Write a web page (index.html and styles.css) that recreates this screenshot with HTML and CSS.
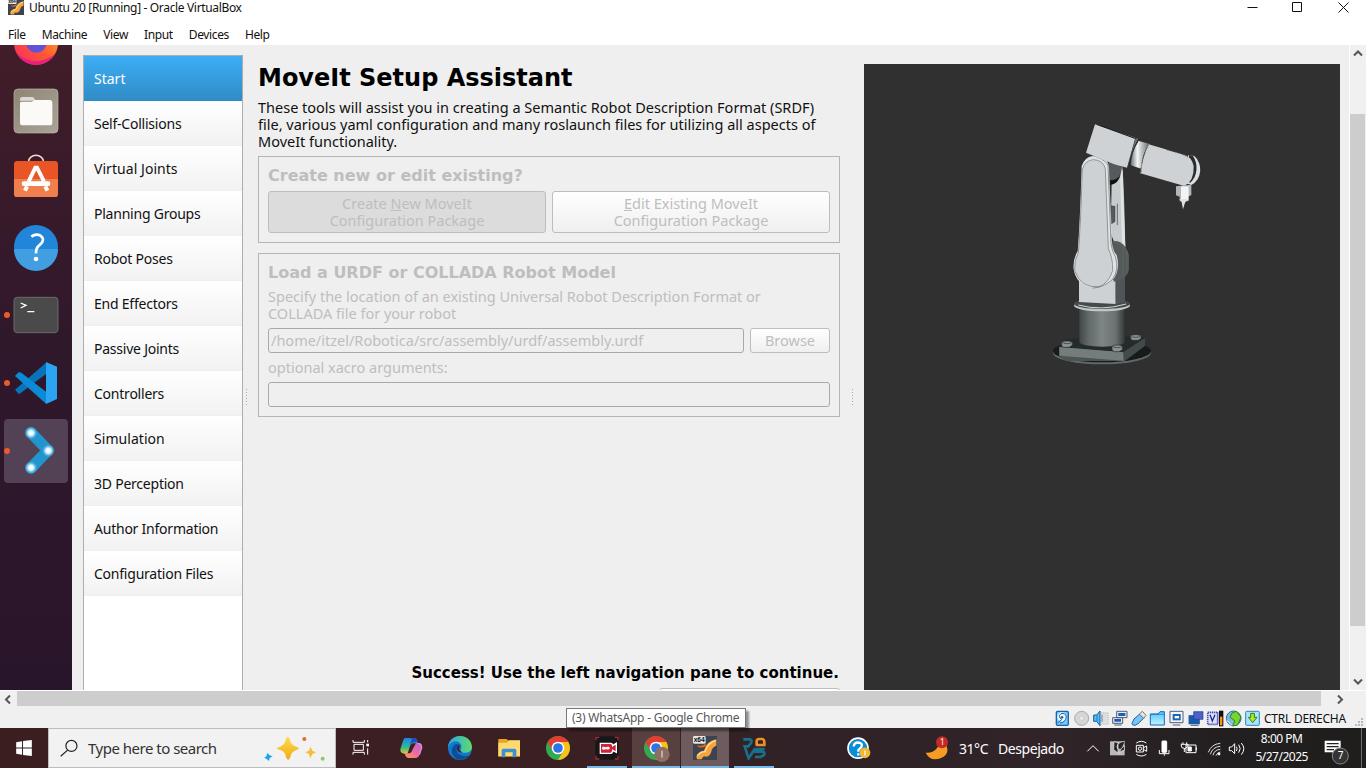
FILE: index.html
```html
<!DOCTYPE html>
<html lang="en">
<head>
<meta charset="utf-8">
<title>Ubuntu 20 [Running] - Oracle VirtualBox</title>
<link rel="stylesheet" href="styles.css">
</head>
<body>
<svg class="defs" width="0" height="0">
  <defs>
    <linearGradient id="doc" x1="0" y1="0" x2="1" y2="1"><stop offset="0" stop-color="#8d8674"/><stop offset="1" stop-color="#aaa498"/></linearGradient>
    <linearGradient id="blue" x1="0" y1="0" x2="0" y2="1"><stop offset="0" stop-color="#4cc8ff"/><stop offset="1" stop-color="#c3f0ff"/></linearGradient>
    <linearGradient id="fox" x1="0" y1="1" x2="1" y2="0"><stop offset="0" stop-color="#f5246c"/><stop offset=".5" stop-color="#ff5c2e"/><stop offset="1" stop-color="#ffbe38"/></linearGradient>
    <linearGradient id="metal"><stop offset="0" stop-color="#414646"/><stop offset=".2" stop-color="#626969"/><stop offset=".5" stop-color="#7d8585"/><stop offset=".8" stop-color="#6a7171"/><stop offset="1" stop-color="#343838"/></linearGradient>
    <linearGradient id="chromeTube"><stop offset="0" stop-color="#6c7173"/><stop offset=".35" stop-color="#f2f5f6"/><stop offset="1" stop-color="#5e6365"/></linearGradient>
    <linearGradient id="edgeA"><stop offset="0" stop-color="#2aa8e8"/><stop offset="1" stop-color="#5fdc68"/></linearGradient>
    <linearGradient id="copA" x1="0" y1="0" x2="0" y2="1"><stop offset="0" stop-color="#1d86e8"/><stop offset=".6" stop-color="#35bb8b"/><stop offset="1" stop-color="#efc52d"/></linearGradient>
    <linearGradient id="copB" x1="1" y1="0" x2="0" y2="1"><stop offset="0" stop-color="#ad62ec"/><stop offset=".5" stop-color="#ee6b9e"/><stop offset="1" stop-color="#f99a57"/></linearGradient>
    <linearGradient id="gold" x1="0" y1="0" x2="0" y2="1"><stop offset="0" stop-color="#ffda4a"/><stop offset="1" stop-color="#f1ab18"/></linearGradient>
    <radialGradient id="star"><stop offset="0" stop-color="#fff"/><stop offset=".4" stop-color="#dff4ff"/><stop offset="1" stop-color="#2ba8e0" stop-opacity="0"/></radialGradient>
    <symbol id="chrome" viewBox="0 0 72 72"><circle cx="36" cy="36" r="36" fill="#34a853"/><path d="M5 18A36 36 0 0 1 67 18H36A18 18 0 0 0 20 45z" fill="#e63b2e"/><path d="M67 18A36 36 0 0 1 36 72L52 45A18 18 0 0 0 36 18z" fill="#fbc116"/><circle cx="36" cy="36" r="19" fill="#fff"/><circle cx="36" cy="36" r="14.5" fill="#2c75e8"/></symbol>
    <symbol id="vbox" viewBox="0 0 72 72"><path d="M0 0H72V72H0z" fill="#3b4450"/><path d="M10 61Q18 44 33 44Q39 16 70 10V29Q56 34 54 50Q46 66 35 61Q29 61 26 70H12z" fill="#f6a43b"/><path d="M13 59Q22 48 36 47Q44 20 69 13" fill="none" stroke="#ffe4a0" stroke-width="4"/><path d="M12 27Q26 34 38 22V31Q29 37 15 33z" fill="#e5651d"/><rect y="0" width="38" height="23" rx="4" fill="#e4e6e8"/><text x="2" y="19" class="x64">x64</text></symbol>
  </defs>
</svg>

<header class="titlebar">
  <svg class="title-icon" viewBox="0 0 72 72"><use href="#vbox"/></svg>
  <span class="title-text">Ubuntu 20 [Running] - Oracle VirtualBox</span>
  <svg class="win-controls" viewBox="0 0 110 16" fill="none" stroke="#111"><path d="M.5 7.500H10.500M45.500 2.500H54.500V11.500H45.500zM91.500 2.500L101.500 12.500M101.500 2.500L91.500 12.500"/></svg>
</header>
<nav class="menubar"><span>File</span><span>Machine</span><span>View</span><span>Input</span><span>Devices</span><span>Help</span></nav>

<div class="guest">
  <aside class="dock">
    <svg viewBox="0 135 216 1310">
      <circle cx="108" cy="129" r="66" fill="url(#fox)"/><path d="M51 162A66 66 0 0 0 165 162Q108 205 51 162" fill="#e3158c" opacity=".75"/><circle cx="109" cy="127" r="31" fill="#6152dc"/>
      <rect x="42" y="267" width="132" height="132" rx="12" fill="url(#doc)" stroke="#beb9ab" stroke-width="2"/><path d="M60 297Q60 291 67 291H96Q101 291 104 297L108 302H60z" fill="#ddd9d3"/><path d="M60 309Q60 305 67 305H95L105 300H149Q157 300 157 308V368Q157 376 149 376H68Q60 376 60 368z" fill="#fbfaf8"/>
      <path d="M86 492V484A22 18 0 0 1 130 484V492" fill="none" stroke="#f6dccb" stroke-width="4.500"/><rect x="42" y="483" width="132" height="108" rx="10" fill="#e95524"/><path d="M42 537H174V581Q174 591 164 591H52Q42 591 42 581z" fill="#f07f4d"/><g stroke="#fff" fill="none"><path d="M86 544L106 503H111L132 544M81 559L75 572M136 559L142 572" stroke-width="12"/><path d="M72 551H144" stroke-width="14" stroke-linecap="round"/></g>
      <circle cx="108" cy="741" r="66" fill="#2186da"/><path d="M42 747A66 66 0 0 0 174 747z" fill="#419fe1"/><path d="M94 710Q107 700 120 706Q138 718 120 734Q107 744 108 760" fill="none" stroke="#fff" stroke-width="8"/><circle cx="108" cy="777" r="7" fill="#fff"/>
      <rect x="42" y="892" width="132" height="106" rx="10" fill="#4a4a4a" stroke="#6b6b6b" stroke-width="3"/><path d="M62 909L78 916L62 924M82 935H103" fill="none" stroke="#fff" stroke-width="4"/>
      <path d="M45 1169L138 1088V1122L57 1183z" fill="#0873b8"/><path d="M45 1128L56 1117Q60 1115 66 1120L138 1175V1211z" fill="#0b8bd5"/><path d="M138 1086L171 1100V1197L138 1212z" fill="#2ba5f2"/>
      <rect x="12" y="1257" width="192" height="192" rx="12" fill="#534156"/><path d="M93 1298L144 1351L93 1404" fill="none" stroke="#2295ce" stroke-width="34" stroke-linecap="round" stroke-linejoin="round"/><circle cx="93" cy="1299" r="20" fill="url(#star)"/><circle cx="145" cy="1352" r="20" fill="url(#star)"/><circle cx="93" cy="1403" r="20" fill="url(#star)"/>
      <g fill="#e95b2e"><circle cx="21" cy="945" r="9"/><circle cx="21" cy="1149" r="9"/><circle cx="21" cy="1353" r="9"/></g>
    </svg>
  </aside>
  <ul class="steps">
    <li class="current">Start</li><li>Self-Collisions</li><li class="wide">Virtual Joints</li><li>Planning Groups</li><li>Robot Poses</li><li>End Effectors</li><li>Passive Joints</li><li>Controllers</li><li class="wide">Simulation</li><li>3D Perception</li><li>Author Information</li><li>Configuration Files</li>
  </ul>
  <div class="splitter left"></div>
  <main class="setup">
    <h1>MoveIt Setup Assistant</h1>
    <p class="intro"><span>These tools will assist you in creating a Semantic Robot Description Format (SRDF)</span><span>file, various yaml configuration and many roslaunch files for utilizing all aspects of</span><span>MoveIt functionality.</span></p>
    <section class="group choose">
      <h2>Create new or edit existing?</h2>
      <div class="choices">
        <button class="pressed">Create <u>N</u>ew MoveIt<br>Configuration Package</button>
        <button><u>E</u>dit Existing MoveIt<br>Configuration Package</button>
      </div>
    </section>
    <section class="group load">
      <h2>Load a URDF or COLLADA Robot Model</h2>
      <p><span>Specify the location of an existing Universal Robot Description Format or</span><span>COLLADA file for your robot</span></p>
      <div class="path"><div class="field">/home/itzel/Robotica/src/assembly/urdf/assembly.urdf</div><button>Browse</button></div>
      <label>optional xacro arguments:</label>
      <div class="field"></div>
    </section>
    <p class="success">Success! Use the left navigation pane to continue.</p>
    <div class="load-files"></div>
  </main>
  <div class="splitter right"></div>
  <div class="viewport">
    <svg viewBox="0 0 600 795">
      <ellipse cx="216" cy="728" rx="147" ry="35" fill="#606868"/><ellipse cx="216" cy="723" rx="147" ry="34" fill="#171b1b"/>
      <path d="M88 710L279 726L344 683V708L284 753H108L88 737z" fill="#4d5454"/><path d="M88 711L111 687L333 678L344 685L280 727z" fill="#252a2a"/><path d="M88 711L280 727V752L88 737z" fill="#747c7c"/><path d="M280 727L344 686V707L284 752z" fill="#444a4a"/>
      <path d="M148 590H284V695A68 15 0 0 1 148 695z" fill="url(#metal)"/>
      <g fill="#8a9292" stroke="#2e3333" stroke-width="2"><path d="M95 696H127V706L117 712H100L95 706zM246 708H277V719L267 725H253L246 719zM302 676H333V686L324 691H308L302 686z"/><ellipse cx="111" cy="697" rx="13" ry="4"/><ellipse cx="262" cy="709" rx="13" ry="4"/><ellipse cx="317" cy="678" rx="13" ry="4"/></g>
      <ellipse cx="216" cy="587" rx="84" ry="17" fill="#c0c6c7"/><ellipse cx="216" cy="581" rx="84" ry="16" fill="#454a4a"/><path d="M145 585Q215 604 288 582" stroke="#d4d8da" stroke-width="3" fill="none"/>
      <path d="M147 497L257 510V582L147 576z" fill="#cdd1d4"/><path d="M257 506L285 490V575L257 583z" fill="#505657"/>
      <path d="M246 173L277 170Q282 220 286 414L264 425L242 370z" fill="#c6cbce"/><path d="M270 183L278 180Q280 280 286 410L276 402z" fill="#dfe3e4"/>
      <path d="M236 152L278 162L271 198Q266 219 240 225z" fill="#555b5d"/><path d="M238 211Q265 211 270 192Q267 221 240 225z" fill="#111"/>
      <path d="M245 394A43 55 0 0 1 297 443V479Q291 510 251 515z" fill="#54595a"/><path d="M249 394Q286 405 297 440M279 410V500M291 425V490" stroke="#747a7b" fill="none"/>
      <path d="M243 287L255 289V335L244 342z" fill="#555b5d" stroke="#222"/><path d="M262 281V345" stroke="#656b6d" stroke-width="3"/>
      <path d="M155 168Q165 140 190 138Q234 139 237 171L246 400Q250 427 260 435Q272 480 248 511Q216 539 180 531Q139 523 131 478Q128 448 143 424Q150 340 155 168z" fill="#e0e3e5"/>
      <path d="M159 178Q165 151 190 149Q222 149 226 179L234 416Q248 446 245 482Q237 520 203 531Q153 529 136 487Q130 454 146 429Q155 344 159 178z" fill="#cdd1d4"/>
      <path d="M157 180Q164 151 190 149Q221 150 226 178L235 416Q249 445 248 482Q236 519 208 530Q153 536 134 482Q132 452 145 428Q152 350 157 180z" fill="none" stroke="#8f9597" stroke-width="3"/><path d="M170 132Q224 144 234 165L243 400Q246 425 256 440Q269 480 246 510Q217 534 188 534" fill="none" stroke="#3a4042" stroke-width="1.500"/>
      <path d="M195 43L316 83L291 173L253 163L234 155L168 128z" fill="#ced2d5"/><path d="M195 43L218 48L331 89L316 87z" fill="#171a1b"/><path d="M316 86L325 84Q302 140 292 173z" fill="#666c6f"/>
      <path d="M324 92L360 102Q334 131 336 177L302 166Q301 135 324 92z" fill="url(#chromeTube)"/><path d="M324 93Q302 126 300 166L312 175" fill="none" stroke="#2b2e30" stroke-width="4"/>
      <path d="M474 136L493 138A48 52 0 0 1 484 225L464 218z" fill="#dce0e1"/><path d="M477 135L489 138A43 54 0 0 1 481 218L470 213z" fill="#292c2e"/>
      <path d="M356 103L465 135Q487 143 491 169Q493 213 463 228L331 190Q339 135 356 103z" fill="#ced2d5"/><path d="M356 104Q334 140 333 189M410 119L451 130L474 141" fill="none" stroke="#303335" stroke-width="2" stroke-dasharray="6 2"/>
      <path d="M438 229L484 224V255L473 261V274H449V260L438 256z" fill="#b2b7ba"/><path d="M453 229H476V272H453z" fill="#f1f3f4"/><path d="M448 267H474L465 278L459 298L455 277z" fill="#dee2e4"/>
    </svg>
  </div>
  <div class="vscroll"><svg viewBox="0 0 16 16"><path d="M4 10L8 6L12 10"/></svg><i></i><svg viewBox="0 0 16 16"><path d="M4 6L8 10L12 6"/></svg></div>
</div>

<div class="hscroll"><svg viewBox="0 0 17 15"><path d="M10 4L6 8L10 12"/></svg><i></i><svg viewBox="0 0 17 15"><path d="M6 4L10 8L6 12"/></svg></div>

<footer class="status">
  <div class="tooltip">(3) WhatsApp - Google Chrome</div>
  <div class="indicators">
    <svg viewBox="67 118 57 51"><rect x="77" y="122" width="36" height="42" rx="4" fill="#72c9fc" stroke="#1665ae" stroke-width="4"/><circle cx="94" cy="139" r="14" fill="#eef8ff"/><path d="M80 157L93 147Q80 137 91 129Q104 125 107 139Q103 157 88 157" fill="none" stroke="#2462a6" stroke-width="3"/><circle cx="94" cy="140" r="4" fill="#2462a6"/></svg>
    <svg viewBox="126 118 57 51"><circle cx="155" cy="143" r="21" fill="#d6d6d6" stroke="#ababab" stroke-width="3"/><circle cx="155" cy="143" r="6" fill="#eee" stroke="#aaa"/></svg>
    <svg viewBox="183 118 57 51"><path d="M212 126H235V161H212" fill="#ddd" stroke="#aaa" stroke-width="2" stroke-dasharray="3"/><path d="M191 133H200L210 121V165L200 152H191z" fill="#50bdf5" stroke="#185c9f" stroke-width="3"/><path d="M201 134V151M216 132V154" stroke="#185c9f" stroke-width="2"/></svg>
    <svg viewBox="240 118 57 51"><path d="M260 122H291V141H260zM248 141H278V158H248z" fill="#e7ecf4" stroke="#555c74" stroke-width="3"/><path d="M265 127H286V136H265zM253 145H273V153H253z" fill="#1c5fad"/><path d="M253 163H275" stroke="#555c74" stroke-width="3"/></svg>
    <svg viewBox="297 118 57 51"><path d="M306 158L312 145L329 130L341 143L324 159Q315 168 307 162z" fill="#75c5f5" stroke="#2361aa" stroke-width="3"/><path d="M328 130L337 122L348 134L341 143z" fill="#e6e6e6" stroke="#777" stroke-width="3"/></svg>
    <svg viewBox="354 118 57 51"><path d="M361 130L384 130L390 123H403V163H361z" fill="url(#blue)" stroke="#1769b8" stroke-width="3"/><path d="M363 131H402" stroke="#1769b8" stroke-width="2"/></svg>
    <svg viewBox="411 118 57 51"><path d="M420 122H459V156H420zM428 163H451" fill="#f1f5fa" stroke="#555c74" stroke-width="3"/><path d="M428 130H452V149H428z" fill="#1864b6"/><path d="M434 136H447V143H434z" fill="#fff"/></svg>
    <svg viewBox="468 118 57 51"><rect x="475" y="133" width="35" height="28" fill="#185aab" stroke="#eee"/><path d="M491 123H519V146H491z" fill="#4c61c9" stroke="#2b398d" stroke-width="2"/><path d="M482 164H506" stroke="#777" stroke-width="4"/></svg>
    <svg viewBox="525 118 57 51"><rect x="533" y="125" width="30" height="36" fill="#dce0ff" stroke="#444bac" stroke-width="5" stroke-dasharray="4 2"/><path d="M540 132L547 151L555 132" fill="none" stroke="#252b8b" stroke-width="4"/><path d="M567 120H580V167H567z" fill="#111"/><path d="M570 138H577V164H570z" fill="#ff9417"/></svg>
    <svg viewBox="583 118 57 51"><circle cx="612" cy="143" r="22" fill="#7dbbe7" stroke="#246dae" stroke-width="3"/><path d="M607 127L620 122L634 139L624 163L608 166L616 151L601 140z" fill="#79d52d" stroke="#298720" stroke-width="3"/><path d="M591 149L601 158L607 164" stroke="#fff" stroke-width="3"/></svg>
    <svg viewBox="640 118 57 51"><rect x="648" y="122" width="41" height="42" rx="3" fill="#a4e5ff" stroke="#3582b4" stroke-width="3"/><path d="M663 128H674V140H682L669 156L656 140H663z" fill="#aee72c" stroke="#387e1c" stroke-width="3"/></svg>
  </div>
  <span class="hostkey">CTRL DERECHA</span>
  <svg class="grip" viewBox="0 0 9 9" fill="#b8b8b8"><path d="M6 0H8V2H6zM3 3H5V5H3zM6 3H8V5H6zM0 6H2V8H0zM3 6H5V8H3zM6 6H8V8H6z"/></svg>
</footer>

<div class="taskbar">
  <div class="start"><svg viewBox="48 179 48 49" fill="#fff"><path d="M48 186L66 183V202H48zM69 182L96 179V202H69zM48 205H66V224L48 221zM69 205H96V228L69 225z"/></svg></div>
  <div class="search">
    <svg class="glass" viewBox="178 178 52 52" fill="none" stroke="#222" stroke-width="3.500"><circle cx="211" cy="198" r="16"/><path d="M200 210L180 228"/></svg>
    <span>Type here to search</span>
    <svg class="sparkles" viewBox="790 162 189 81"><path d="M865 168Q869 167 873 184Q876 193 892 198Q904 202 892 206Q878 211 874 221Q869 239 865 236Q860 236 857 220Q853 210 839 206Q825 202 837 199Q853 193 856 184Q860 167 865 168z" fill="url(#gold)"/><path d="M933 197L938 209L949 214L938 219L932 232L928 219L917 214L928 209z" fill="#f7be31"/><path d="M803 216L810 223L819 226L810 231L808 240L801 234L794 230L800 226z" fill="#1ba5ed"/><circle cx="914" cy="174" r="6" fill="#e56739"/><circle cx="969" cy="233" r="6" fill="#91c66c"/></svg>
  </div>
  <div class="apps">
    <div class="app"><svg viewBox="57 138 72 72" fill="none" stroke="#fff" stroke-width="3"><path d="M66 150V157H100V150M66 194V187H100V194M69 163H97V181H69zM110 150V157M110 175V194"/><path d="M106 161H114V169H106z" fill="#fff" stroke="none"/></svg></div>
    <div class="app"><svg viewBox="207 138 72 72"><path d="M224 144H252Q259 144 262 154L264 160H249Q242 160 239 172L233 190Q229 195 215 188Q209 184 212 174L220 150z" fill="url(#copA)"/><path d="M237 144H252Q259 144 263 157H251Q239 158 235 174L246 146z" fill="#2348c2"/><path d="M258 159H266Q278 160 275 173L267 197Q264 204 253 204H236Q227 204 224 190H236Q244 190 247 180z" fill="url(#copB)"/><path d="M264 161Q274 160 275 173L268 194" fill="none" stroke="#e88bd1" stroke-width="4"/></svg></div>
    <div class="app"><svg viewBox="354 138 72 72"><circle cx="390" cy="174" r="36" fill="#1478c8"/><path d="M354 174C355 126 426 126 426 174Q421 191 399 188Q386 184 394 176Q397 154 374 154Q358 158 354 174z" fill="url(#edgeA)"/><path d="M370 169Q356 185 380 208Q402 213 419 195Q398 204 383 190Q374 175 389 164Q376 158 370 169z" fill="#0b4d98"/><path d="M391 166Q382 181 397 187Q388 190 382 181Q378 168 391 166z" fill="#3c2024"/></svg></div>
    <div class="app"><svg viewBox="501 138 72 72"><path d="M505 147H530L536 152H570V200H505z" fill="#e7a520"/><path d="M505 158H531L537 151H570V198H505z" fill="#ffda71"/><path d="M515 181Q515 176 520 176H554Q559 176 559 181V202H548V187H526V202H515z" fill="#3b91d3"/></svg></div>
    <div class="app"><svg viewBox="0 0 72 72"><use href="#chrome"/></svg></div>
    <div class="app running"><svg viewBox="135 242 72 72"><path d="M136 243H206V313H136z" fill="#15171b"/><path d="M138 255V246H148M194 246H204V255M138 301V311H148M194 311H204V301" fill="none" stroke="#a92b35" stroke-width="4"/><path d="M151 264H182Q188 264 188 271L199 264V291L188 285Q188 294 182 294H151z" fill="#ce2439" stroke="#fff" stroke-width="4"/><path d="M167 279C155 270 155 288 167 279C179 270 182 286 167 279" fill="none" stroke="#fff" stroke-width="4"/></svg></div>
    <div class="app running active"><svg viewBox="0 0 78 78"><use href="#chrome" width="72" height="72"/><circle cx="54" cy="55" r="23" fill="#8d6e63"/><path d="M54 44V65" stroke="#eee" stroke-width="3"/></svg></div>
    <div class="app running active bright"><svg viewBox="0 0 72 72"><use href="#vbox"/></svg></div>
    <div class="app running"><svg viewBox="578 242 72 72" fill="none" stroke-width="8"><path d="M582 252H602Q609 253 605 263L597 273H586L598 309L618 278" stroke="#17708c"/><path d="M646 281H626Q616 281 616 289H638Q648 289 644 299L634 305H617" stroke="#17708c"/><path d="M622 269V256Q623 251 630 251H639Q645 252 645 261V269H619" stroke="#e99229"/></svg></div>
  </div>
  <svg class="help" viewBox="890 246 72 68"><circle cx="923" cy="279" r="30" fill="#078ed5" stroke="#fff" stroke-width="5"/><path d="M910 274Q911 262 924 262Q937 264 934 274Q930 279 924 285V290M924 294V301" fill="none" stroke="#fff" stroke-width="7"/><circle cx="944" cy="293" r="16" fill="#f4b72f"/><path d="M944 286V301" stroke="#fff" stroke-width="4"/></svg>
  <div class="weather"><svg viewBox="285 407 72 72"><path d="M333 411Q367 451 341 469Q304 489 287 457Q325 461 333 411z" fill="#f69b25"/><circle cx="336" cy="426" r="18" fill="#c42b27"/><text x="330" y="434" class="badge">1</text></svg><span>31°C</span><span>Despejado</span></div>
  <svg class="tray" viewBox="165 206 485 57" fill="none" stroke="#fff" stroke-width="3">
    <path d="M172 243L189 226L206 243"/>
    <path d="M240 213H284V255H240z" fill="#b8b8b8" stroke="none"/><path d="M252 214L264 217V248L251 238zM284 213Q263 215 261 229Q261 239 271 237L283 226V240Q268 242 267 253" fill="#242424" stroke="#eee" stroke-width="2"/>
    <path d="M319 225H340V245H319zM341 232L350 227V243L341 238M319 218Q334 208 349 218M319 252Q334 262 349 252"/><circle cx="330" cy="235" r="5"/>
    <rect x="396" y="212" width="14" height="34" rx="2" fill="#fff"/><path d="M388 239V250H417V239M403 250V256"/>
    <path d="M468 224H498V247H468zM499 231V240M454 220V227Q454 234 463 234V245M459 216V221M470 216V221M454 222H474V228Q467 235 463 235"/><path d="M474 230H484V242H474z" fill="#fff"/>
    <path d="M535 246Q544 221 571 219M541 252Q548 229 571 228M549 255Q553 238 571 237M558 256Q562 246 571 245" stroke-width="2.500"/><circle cx="567" cy="251" r="3" fill="#fff"/>
    <path d="M598 230H605L614 220V250L605 241H598zM619 229Q624 235 619 242M626 223Q635 235 626 247M634 218Q649 235 634 253"/>
  </svg>
  <div class="clock"><span>8:00 PM</span><span>5/27/2025</span></div>
  <svg class="notif" viewBox="883 206 78 78"><path d="M885 211H933V246H919L909 253V246H885z" fill="#fff"/><path d="M891 220H927M891 229H927M891 238H913" stroke="#222" stroke-width="4"/><circle cx="932" cy="257" r="24" fill="#343434" stroke="#858585" stroke-width="3"/><text x="924" y="267" class="count">7</text></svg>
  <i class="peek"></i>
</div>
</body>
</html>
```
FILE: styles.css
```css
* { box-sizing: border-box; }
body { margin: 0; width: 1366px; height: 768px; overflow: hidden; display: flex; flex-direction: column; background: #fff; font-family: "Noto Sans", sans-serif; color: #111; white-space: nowrap; }
svg { display: block; flex: none; }
.defs { position: absolute; }
p, h1, h2, ul { margin: 0; padding: 0; }

/* Host window */
.titlebar { height: 24px; display: flex; align-items: flex-start; padding-left: 8px; overflow: hidden; }
.title-icon { width: 16px; height: 16px; margin-top: -1px; }
.title-text { font-size: 12px; line-height: 16px; letter-spacing: -.34px; margin-left: 5px; }
.win-controls { width: 110px; height: 16px; margin-left: auto; margin-right: 9px; }
.menubar { height: 21px; display: flex; font-size: 12px; line-height: 21px; letter-spacing: -.37px; padding-left: 8px; gap: 16px; }

/* Guest desktop */
.guest { height: 645px; display: flex; background: #efefef; overflow: hidden; }
.dock { width: 72px; flex: none; background: linear-gradient(#421d29, #30182b 45%, #29152b); }
.dock svg { width: 72px; height: 436.67px; overflow: visible; }
.steps { width: 160px; height: 700px; flex: none; margin: 10px 0 0 11px; border: 1px solid #adadad; background: #fff; list-style: none; }
.steps li { height: 45px; padding-left: 10px; font-size: 14px; line-height: 45px; letter-spacing: -.23px; background: linear-gradient(#fff, #f2f2f2); border-bottom: 1px solid #efefef; }
.steps .wide { letter-spacing: .05px; }
.steps .current { color: #fff; letter-spacing: 0; background: linear-gradient(#3daef6, #308cc6); border-bottom-color: #308cc6; }
.splitter { width: 1px; height: 17px; margin-top: 344px; flex: none; background: repeating-linear-gradient(#aaa 0 1px, transparent 1px 3px); }
.splitter.left { margin-left: 3px; }
.splitter.right { margin-left: 12px; }
.setup { width: 582px; flex: none; margin-left: 11px; display: flex; flex-direction: column; font-size: 14.5px; }
h1 { height: 55px; font: bold 24px/32px "DejaVu Sans", sans-serif; padding-top: 17px; color: #000; }
.intro { padding-top: 5px; }
.setup p span { display: block; height: 17px; line-height: 17px; }
.group { border: 1px solid #b5b5b5; padding: 9px; color: #bebebe; }
.choose { height: 87px; margin-top: 6px; }
.load { height: 164px; margin-top: 10px; }
h2 { font: bold 16px/20px "DejaVu Sans", sans-serif; }
.choices { display: flex; gap: 6px; margin-top: 5px; }
button { font: inherit; line-height: 17px; color: #bebebe; padding: 0; border: 1px solid #bdbdbd; border-radius: 3px; background: linear-gradient(#fff, #efefef); }
.choices button { flex: 1; height: 42px; }
.choices .pressed { background: #dcdcdc; }
.load p { margin-top: 5px; }
.path { display: flex; gap: 6px; margin-top: 6px; }
.field { height: 25px; border: 1px solid #aaa; border-radius: 3px; flex: 1; padding-left: 2px; line-height: 23px; }
.path button { width: 80px; height: 25px; }
label { display: block; height: 29px; line-height: 29px; }
.load > .field { width: 562px; }
.success { margin-top: 245px; height: 22px; align-self: flex-end; padding-right: 1px !important; font: bold 15px/22px "DejaVu Sans", sans-serif; color: #000; }
.load-files { width: 181px; height: 28px; margin-top: 4px; align-self: flex-end; flex: none; border: 1px solid #bdbdbd; border-radius: 3px; background: #fff; }
.viewport { width: 476px; height: 640px; flex: none; margin: 19px 0 0 11px; padding: 46px 0 0 166px; background: #303030; }
.viewport svg { width: 200px; height: 265px; }

/* Scroll bars */
.vscroll { width: 17px; margin-left: auto; display: flex; flex-direction: column; border-left: 1px solid #fff; background: #f0f0f0; flex: none; }
.vscroll svg { width: 16px; height: 17px; }
.vscroll i { height: 513px; margin: 52px 1px 47px 0; background: #cdcdcd; }
.hscroll { height: 17px; display: flex; border-top: 1px solid #fff; background: #f0f0f0; }
.hscroll svg { width: 17px; height: 16px; }
.hscroll i { width: 1304px; height: 15px; background: #cdcdcd; margin-right: 11px; }
.vscroll path, .hscroll path { fill: none; stroke: #555; stroke-width: 2; }

/* VirtualBox status bar */
.status { height: 21px; position: relative; display: flex; background: #f0f0f0; align-items: center; justify-content: flex-end; padding-right: 2px; }
.indicators { display: flex; margin: 1px 2px 0 0; }
.indicators svg { width: 19px; height: 17px; }
.hostkey { font-size: 12px; line-height: 17px; letter-spacing: -.25px; width: 91px; padding-top: 1px; }
.grip { width: 9px; height: 9px; align-self: flex-end; margin-bottom: 1px; }
.tooltip { position: absolute; left: 566px; top: 1px; width: 180px; height: 20px; border: 1px solid #767676; background: #fff; box-shadow: 3px 3px 2px #0006; color: #575757; font-size: 12px; line-height: 18px; letter-spacing: -.23px; padding-left: 5px; }

/* Taskbar */
.taskbar { height: 40px; display: flex; align-items: stretch; color: #fff; background: linear-gradient(90deg, #3b1e20, #3b2023 42%, #302226 58%, #302428 77%, #221f20 90%, #1f1e1c); }
.taskbar > * { flex: none; }
.start { width: 48px; display: grid; place-items: center; }
.start svg { width: 16px; height: 16px; }
.search { width: 288px; display: flex; align-items: center; background: #f2f2f2; border: 1px solid #bdbdbd; color: #333; font-size: 15px; letter-spacing: -.5px; }
.glass { width: 18px; height: 18px; margin-left: 11px; }
.search span { margin-left: 10px; width: 175px; }
.sparkles { width: 63px; height: 27px; }
.apps { display: flex; width: 443px; padding-left: 2px; }
.app { width: 49px; padding: 8px 0 0 12px; }
.app svg { width: 24px; height: 24px; }
.app.active svg { width: 26px; height: 26px; }
.app.bright svg { width: 24px; height: 24px; }
.app.running { background: linear-gradient(#76b9ed, #76b9ed) 4px 38px / 40px 2px no-repeat; }
.app.running.active { background: linear-gradient(#76b9ed, #76b9ed) 0 38px / 48px 2px no-repeat, linear-gradient(#584040, #584040) 0 0 / 48px 40px no-repeat; }
.app.running.bright { background: linear-gradient(#76b9ed, #76b9ed) 0 38px / 48px 2px no-repeat, linear-gradient(#6d5b5d, #6d5b5d) 0 0 / 48px 40px no-repeat; }
.help { width: 24px; height: 23px; margin: 9px 0 0 68px; }
.weather { display: flex; align-items: center; width: 142px; margin-left: 54px; font-size: 14px; letter-spacing: -.45px; }
.weather svg { width: 24px; height: 24px; margin-top: -1px; }
.weather span { margin-left: 10px; }
.weather span + span { margin-left: 10px; }
.tray { width: 161.67px; height: 19px; margin: 11px 0 0 18px; }
.clock { width: 70px; display: flex; flex-direction: column; align-items: center; font-size: 12px; line-height: 18px; letter-spacing: -.5px; padding-top: 2px; }
.notif { width: 26px; height: 26px; margin: 11px 0 0 7px; }
.peek { width: 1px; margin-left: auto; margin-right: 4px; background: #6b6b6b; }
.badge { font-size: 24px; fill: #fff; }
.count { font-size: 30px; fill: #fff; }
.x64 { font: bold 20px "Liberation Sans", sans-serif; fill: #111; }
```
